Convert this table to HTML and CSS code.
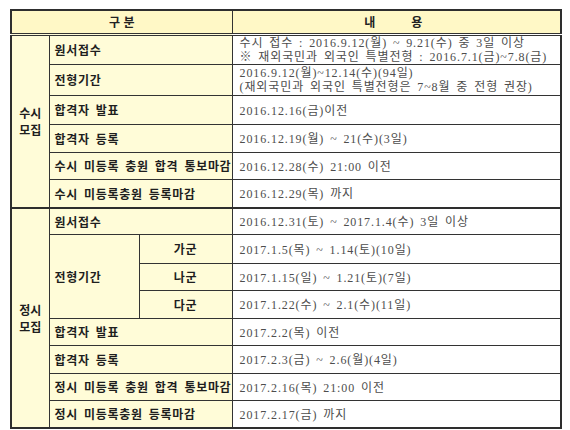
FILE: index.html
```html
<!DOCTYPE html>
<html lang="ko">
<head>
<meta charset="utf-8">
<link rel="stylesheet" href="styles.css">
</head>
<body>
<table class="sched">
  <colgroup>
    <col class="c1"><col class="c2"><col class="c3"><col class="c4">
  </colgroup>
  <thead>
    <tr class="h0"><th colspan="3" class="hd">구 분</th><th class="hd wide">내&emsp;&emsp;&emsp;용</th></tr>
  </thead>
  <tbody class="sec">
    <tr class="r29"><td rowspan="6" class="grp">수시<br>모집</td><td colspan="2" class="lab">원서접수</td><td class="val two">수시 접수 : 2016.9.12(월) ~ 9.21(수) 중 3일 이상<br>※ 재외국민과 외국인 특별전형 : 2016.7.1(금)~7.8(금)</td></tr>
    <tr class="r31"><td colspan="2" class="lab">전형기간</td><td class="val two">2016.9.12(월)~12.14(수)(94일)<br>(재외국민과 외국인 특별전형은 7~8월 중 전형 권장)</td></tr>
    <tr class="r29"><td colspan="2" class="lab">합격자 발표</td><td class="val">2016.12.16(금)이전</td></tr>
    <tr class="r28"><td colspan="2" class="lab">합격자 등록</td><td class="val">2016.12.19(월) ~ 21(수)(3일)</td></tr>
    <tr class="r27"><td colspan="2" class="lab">수시 미등록 충원 합격 통보마감</td><td class="val">2016.12.28(수) 21:00 이전</td></tr>
    <tr class="r29"><td colspan="2" class="lab">수시 미등록충원 등록마감</td><td class="val">2016.12.29(목) 까지</td></tr>
  </tbody>
  <tbody class="sec">
    <tr class="r26"><td rowspan="8" class="grp">정시<br>모집</td><td colspan="2" class="lab">원서접수</td><td class="val">2016.12.31(토) ~ 2017.1.4(수) 3일 이상</td></tr>
    <tr class="r29"><td rowspan="3" class="lab">전형기간</td><td class="lab ctr">가군</td><td class="val">2017.1.5(목) ~ 1.14(토)(10일)</td></tr>
    <tr class="r27"><td class="lab ctr">나군</td><td class="val">2017.1.15(일) ~ 1.21(토)(7일)</td></tr>
    <tr class="r28"><td class="lab ctr">다군</td><td class="val">2017.1.22(수) ~ 2.1(수)(11일)</td></tr>
    <tr class="r27"><td colspan="2" class="lab">합격자 발표</td><td class="val">2017.2.2(목) 이전</td></tr>
    <tr class="r28"><td colspan="2" class="lab">합격자 등록</td><td class="val">2017.2.3(금) ~ 2.6(월)(4일)</td></tr>
    <tr class="r27"><td colspan="2" class="lab">정시 미등록 충원 합격 통보마감</td><td class="val">2017.2.16(목) 21:00 이전</td></tr>
    <tr class="r28"><td colspan="2" class="lab">정시 미등록충원 등록마감</td><td class="val">2017.2.17(금) 까지</td></tr>
  </tbody>
</table>
</body>
</html>
```
FILE: styles.css
```css
html, body { margin: 0; padding: 0; background: #ffffff; }
body { padding: 9px 0 0 10px; }

.sched {
  border-collapse: collapse;
  table-layout: fixed;
  width: 550px;
  border: 2px solid #2e2e2e;
  font-family: "Noto Sans CJK KR", sans-serif;
}
.c1 { width: 38px; }
.c2 { width: 90px; }
.c3 { width: 93px; }
.c4 { width: 329px; }

.sched th, .sched td {
  border: 1px solid #333333;
  padding: 0;
  vertical-align: middle;
}

.h0 { height: 24px; }
.hd {
  background: #fff8c6;
  font-size: 12px;
  font-weight: 700;
  color: #222;
  text-align: center;
  border-bottom: 3px double #333333 !important;
}
.hd.wide { padding-right: 6px; }

.sec + .sec tr:first-child td { border-top: 2px solid #2e2e2e; }

.r26 { height: 26px; }
.r27 { height: 27px; }
.r28 { height: 28px; }
.r29 { height: 29px; }
.r31 { height: 31px; }

.grp {
  background: #fffcd8;
  text-align: center;
  font-size: 12px;
  font-weight: 700;
  line-height: 17px;
  color: #1e1e1e;
}
.lab {
  background: #fffcd8;
  font-size: 12px;
  font-weight: 700;
  color: #1e1e1e;
  padding-left: 5px !important;
  white-space: nowrap;
  letter-spacing: 0.7px;
  word-spacing: 2px;
}
.lab.ctr { text-align: center; padding-left: 0 !important; }

.val {
  background: #ffffff;
  font-family: "Liberation Serif", "Noto Sans CJK KR", serif;
  font-size: 12px;
  color: #4d4d4d;
  padding-left: 7px !important;
  white-space: nowrap;
  letter-spacing: 0.9px;
  word-spacing: 2px;
}
.val.two { line-height: 14px; }
```
